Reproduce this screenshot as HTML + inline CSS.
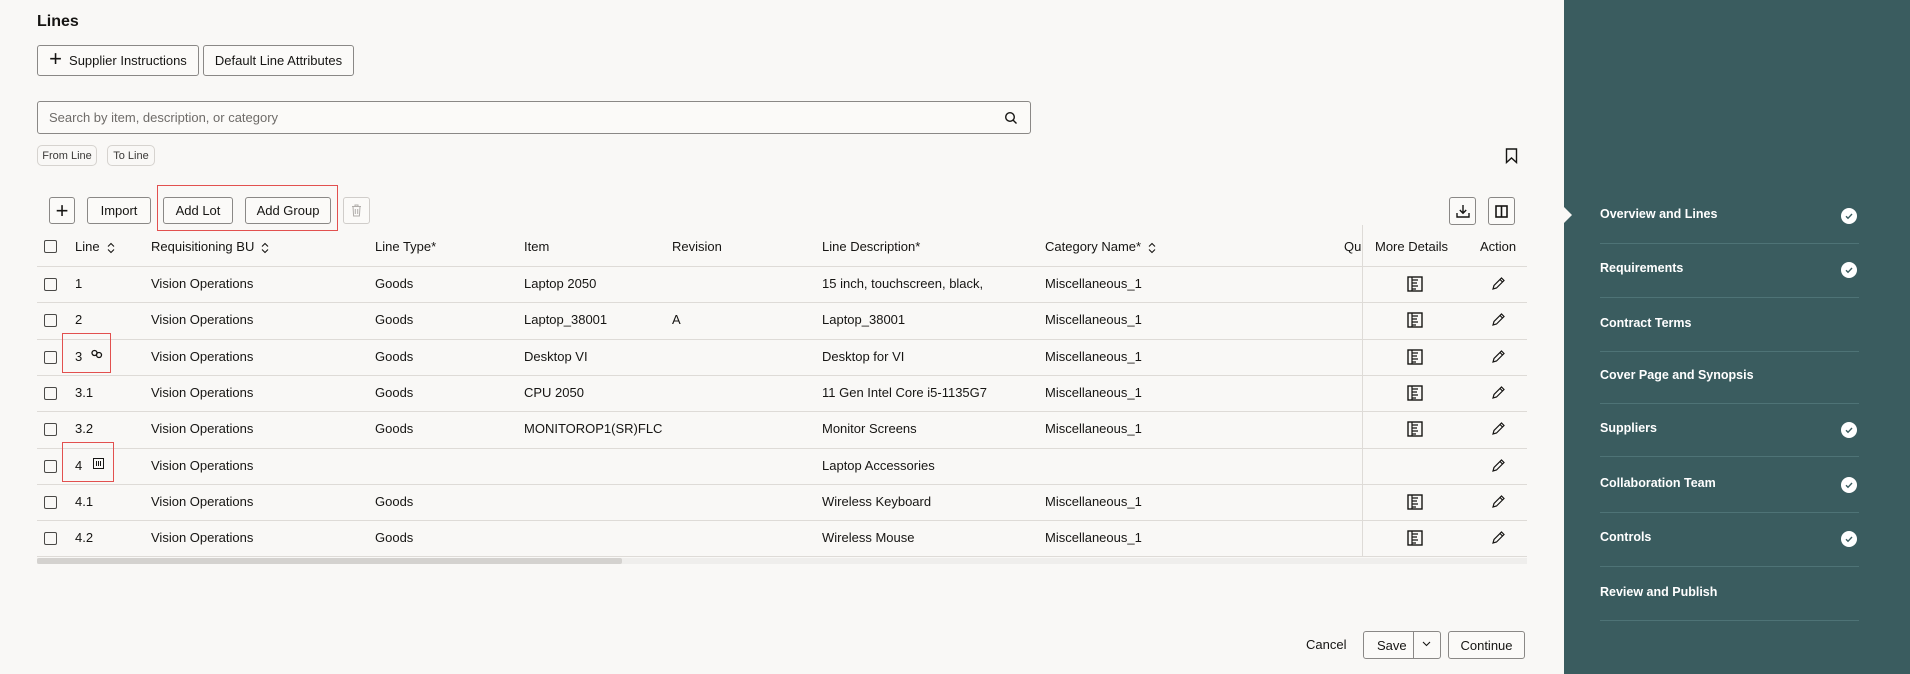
<!DOCTYPE html>
<html><head><meta charset="utf-8"><style>
*{box-sizing:border-box;margin:0;padding:0}
body{width:1910px;height:674px;background:#f9f8f6;font-family:"Liberation Sans",sans-serif;color:#161513;position:relative;overflow:hidden;font-size:13px}
.a{position:absolute;white-space:nowrap}
.btn{position:absolute;border:1px solid #8a8886;border-radius:3px;background:#fbfaf8;font-size:13px;display:flex;align-items:center;justify-content:center;color:#161513}
.chip{position:absolute;border:1px solid #d6d3cf;border-radius:5px;font-size:11px;display:flex;align-items:center;justify-content:center;height:21px;top:145px;color:#3a3937}
.hl{position:absolute;left:37px;width:1490px;height:1px;background:#dedbd7}
.cb{position:absolute;left:44px;width:13px;height:13px;border:1.5px solid #4a4947;border-radius:2px}
.red{position:absolute;border:1.5px solid #e2504f}
.sb{position:absolute;left:1600px;color:#fff;font-weight:bold;font-size:12.5px}
.sep{position:absolute;left:1600px;width:259px;height:1px;background:#4e7376}
.ck{position:absolute;left:1841px;width:16px;height:16px;border-radius:50%;background:#fff}
.so{display:inline-block;vertical-align:middle;margin-left:7px}
</style></head><body>
<div class="a" style="left:37px;top:13px;font-size:16px;font-weight:bold">Lines</div>
<div class="btn" style="left:37px;top:45px;width:162px;height:31px"><span style="font-size:22px;font-weight:300;margin-right:7px;margin-top:-3px">+</span>Supplier Instructions</div>
<div class="btn" style="left:203px;top:45px;width:151px;height:31px">Default Line Attributes</div>
<div style="position:absolute;left:37px;top:101px;width:994px;height:33px;border:1px solid #8a8886;border-radius:3px;background:#fbfaf8"></div>
<div class="a" style="left:49px;top:110px;color:#6f6c69;font-size:13px">Search by item, description, or category</div>
<svg class="a" style="left:1004px;top:111px" width="14" height="14" viewBox="0 0 14 14"><circle cx="6" cy="6" r="4.3" fill="none" stroke="#161513" stroke-width="1.4"/><path d="M9.2 9.2L12.5 12.5" stroke="#161513" stroke-width="1.4"/></svg>
<div class="chip" style="left:37px;width:60px">From Line</div>
<div class="chip" style="left:107px;width:48px">To Line</div>
<svg class="a" style="left:1505px;top:148px" width="13" height="16" viewBox="0 0 13 16"><path d="M1.5 1h10v13.5L6.5 10 1.5 14.5z" fill="none" stroke="#161513" stroke-width="1.4"/></svg>
<div class="btn" style="left:49px;top:197px;width:26px;height:27px;font-size:22px;font-weight:300">+</div>
<div class="btn" style="left:87px;top:197px;width:64px;height:27px">Import</div>
<div class="red" style="left:157px;top:185px;width:181px;height:46px"></div>
<div class="btn" style="left:163px;top:197px;width:70px;height:27px">Add Lot</div>
<div class="btn" style="left:245px;top:197px;width:86px;height:27px">Add Group</div>
<div class="btn" style="left:343px;top:197px;width:27px;height:27px;border-color:#d0cdca"><svg width="11" height="13" viewBox="0 0 11 13"><path d="M1 2.5h9M4 2.5V1h3v1.5M2 2.5l.6 9.5h5.8L9 2.5M4.3 5v5M6.7 5v5" fill="none" stroke="#b0adaa" stroke-width="1"/></svg></div>
<div class="btn" style="left:1449px;top:197px;width:27px;height:28px"><svg width="14" height="14" viewBox="0 0 14 14"><path d="M7 1v8M3.8 6l3.2 3.2L10.2 6M1 9v4h12V9" fill="none" stroke="#161513" stroke-width="1.4"/></svg></div>
<div class="btn" style="left:1488px;top:197px;width:27px;height:28px"><svg width="13" height="13" viewBox="0 0 13 13"><rect x="1" y="1" width="11" height="11" fill="none" stroke="#161513" stroke-width="1.6"/><path d="M6.5 1v11" stroke="#161513" stroke-width="1.6"/></svg></div>

<div class="cb" style="top:240px"></div>
<div class="a" style="left:75px;top:239px">Line<svg class="so" width="8" height="12" viewBox="0 0 8 12"><path d="M1 4.5L4 1.5 7 4.5M1 7.5L4 10.5 7 7.5" fill="none" stroke="#161513" stroke-width="1.1"/></svg></div>
<div class="a" style="left:151px;top:239px">Requisitioning BU<svg class="so" width="8" height="12" viewBox="0 0 8 12"><path d="M1 4.5L4 1.5 7 4.5M1 7.5L4 10.5 7 7.5" fill="none" stroke="#161513" stroke-width="1.1"/></svg></div>
<div class="a" style="left:375px;top:239px">Line Type*</div>
<div class="a" style="left:524px;top:239px">Item</div>
<div class="a" style="left:672px;top:239px">Revision</div>
<div class="a" style="left:822px;top:239px">Line Description*</div>
<div class="a" style="left:1045px;top:239px">Category Name*<svg class="so" width="8" height="12" viewBox="0 0 8 12"><path d="M1 4.5L4 1.5 7 4.5M1 7.5L4 10.5 7 7.5" fill="none" stroke="#161513" stroke-width="1.1"/></svg></div>
<div class="a" style="left:1344px;top:239px;width:17px;overflow:hidden">Quantity</div>
<div class="a" style="left:1375px;top:239px">More Details</div>
<div class="a" style="left:1480px;top:239px">Action</div>
<div style="position:absolute;left:1362px;top:225px;width:1px;height:332px;background:#dedbd7"></div>
<div class="hl" style="top:266px"></div>

<div id="rows"></div>
<div style="position:absolute;left:37px;top:558px;width:1490px;height:6px;background:#efeeec"></div>
<div style="position:absolute;left:37px;top:558px;width:585px;height:6px;background:#d4d2cf;border-radius:2px"></div>

<div class="red" style="left:62px;top:333px;width:49px;height:40px"></div>
<div class="red" style="left:62px;top:442px;width:52px;height:40px"></div>

<div class="a" style="left:1306px;top:637px">Cancel</div>
<div class="btn" style="left:1363px;top:631px;width:78px;height:28px;justify-content:flex-start;padding-left:13px">Save</div>
<div style="position:absolute;left:1413px;top:632px;width:1px;height:26px;background:#8a8886"></div>
<svg class="a" style="left:1422px;top:641px" width="9" height="6" viewBox="0 0 9 6"><path d="M1 1l3.5 3.5L8 1" fill="none" stroke="#161513" stroke-width="1.1"/></svg>
<div class="btn" style="left:1448px;top:631px;width:77px;height:28px">Continue</div>

<div style="position:absolute;left:1564px;top:0;width:346px;height:674px;background:#3a5c5f"></div>
<div style="position:absolute;left:1564px;top:207px;width:0;height:0;border-top:8px solid transparent;border-bottom:8px solid transparent;border-left:8px solid #f9f8f6"></div>
<div id="side"></div>
<script>
var R=[["1","Vision Operations","Goods","Laptop 2050","","15 inch, touchscreen, black,","Miscellaneous_1",1],
["2","Vision Operations","Goods","Laptop_38001","A","Laptop_38001","Miscellaneous_1",1],
["3","Vision Operations","Goods","Desktop VI","","Desktop for VI","Miscellaneous_1",1],
["3.1","Vision Operations","Goods","CPU 2050","","11 Gen Intel Core i5-1135G7","Miscellaneous_1",1],
["3.2","Vision Operations","Goods","MONITOROP1(SR)FLC","","Monitor Screens","Miscellaneous_1",1],
["4","Vision Operations","","","","Laptop Accessories","",0],
["4.1","Vision Operations","Goods","","","Wireless Keyboard","Miscellaneous_1",1],
["4.2","Vision Operations","Goods","","","Wireless Mouse","Miscellaneous_1",1]];
var X=[75,151,375,524,672,822,1045],h="";
R.forEach(function(r,i){var t=Math.round(266+i*36.3),c=t+10;
h+='<div class="cb" style="top:'+(t+12)+'px"></div>';
for(var k=0;k<7;k++)h+='<div class="a" style="left:'+X[k]+'px;top:'+c+'px">'+r[k]+'</div>';
if(r[7])h+='<svg class="a" style="left:1407px;top:'+(t+10)+'px" width="16" height="16" viewBox="0 0 16 16"><rect x="1" y="1" width="14" height="14" fill="none" stroke="#161513" stroke-width="1.4"/><path d="M5 1v14M5 4h6M5 7h5M5 10h6M5 13h4" fill="none" stroke="#161513" stroke-width="1.2"/></svg>';
h+='<svg class="a" style="left:1491px;top:'+(t+11)+'px" width="14" height="14" viewBox="0 0 14 14"><path d="M2 12l1-3.5L10.5 1 13 3.5 5.5 11z M9 2.5l2.5 2.5" fill="none" stroke="#161513" stroke-width="1.2"/></svg>';
h+='<div class="hl" style="top:'+Math.round(266+(i+1)*36.3)+'px"></div>';});
h+='<svg class="a" style="left:91px;top:349px" width="12" height="10" viewBox="0 0 12 10"><circle cx="3.5" cy="4" r="2.5" fill="none" stroke="#161513" stroke-width="1.3"/><circle cx="8" cy="6" r="2.5" fill="none" stroke="#161513" stroke-width="1.3"/></svg>';
h+='<svg class="a" style="left:93px;top:458px" width="11" height="11" viewBox="0 0 11 11"><rect x="0.5" y="0.5" width="10" height="10" fill="none" stroke="#161513"/><path d="M3.5 3v5M5.5 3v5M7.5 3v5" stroke="#161513" stroke-width="1"/></svg>';
document.getElementById('rows').innerHTML=h;
var S=[["Overview and Lines",215,1],["Requirements",269,1],["Contract Terms",324,0],["Cover Page and Synopsis",376,0],["Suppliers",429,1],["Collaboration Team",484,1],["Controls",538,1],["Review and Publish",593,0]],SE=[243,297,351,403,456,512,566,620],g="";
S.forEach(function(s,i){g+='<div class="sb" style="top:'+(s[1]-8)+'px">'+s[0]+'</div>';
if(s[2])g+='<div class="ck" style="top:'+(s[1]-7)+'px"><svg width="16" height="16" viewBox="0 0 16 16"><path d="M5 8.3l2 2 4-4.3" fill="none" stroke="#3a5c5f" stroke-width="1.4"/></svg></div>';
g+='<div class="sep" style="top:'+SE[i]+'px"></div>';});
document.getElementById('side').innerHTML=g;
</script>
</body></html>
